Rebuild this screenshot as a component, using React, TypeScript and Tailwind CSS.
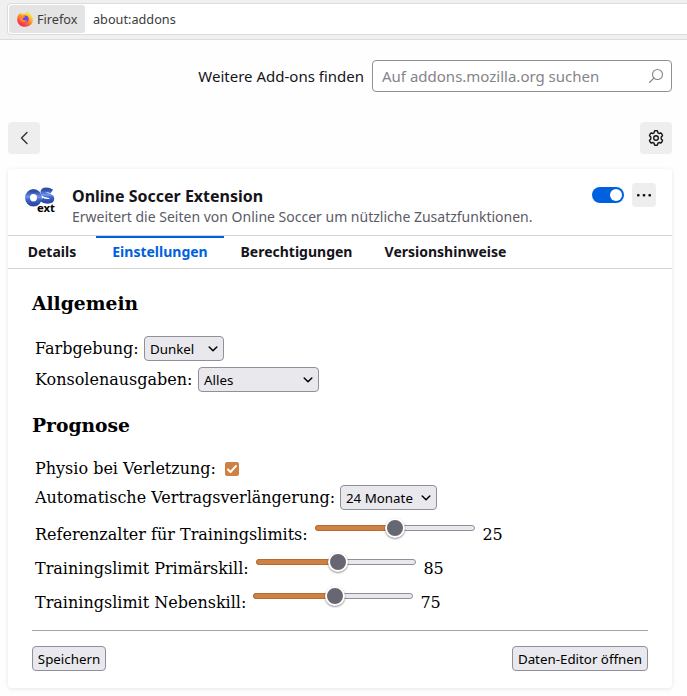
import React from "react";

function FirefoxLogo() {
  return (
    <svg width="16" height="16" viewBox="0 0 16 16">
      <defs>
        <linearGradient id="flame" x1="0.8" y1="0.05" x2="0.25" y2="0.95">
          <stop offset="0" stopColor="#fff04a" />
          <stop offset="0.35" stopColor="#ffbd2e" />
          <stop offset="0.65" stopColor="#ff6a2f" />
          <stop offset="1" stopColor="#f5215f" />
        </linearGradient>
      </defs>
      <path
        d="M8.6 2.8C8.9 1.5 9.8.6 10.7.1c.1 1.3 1 1.8 2 2.7 1.9 1.5 3.2 3.6 3.2 6 0 4-3.4 7-7.8 7S.2 12.7.2 8.7C.2 6.5.7 4.5 1.7 3c0 .5.1.8.3 1.1C2.4 2.9 3 2 3.8 1.3c0 1 .3 1.5 1 1.9 1.2-.7 2.5-.8 3.8-.4z"
        fill="url(#flame)"
      />
      <circle cx="8.2" cy="8.1" r="3.5" fill="#7543e3" />
      <path d="M2 5.2c1.5-1 3-.9 4.2-.2.8.4 1.5.4 2.2.4-.4 1-1.3 1.2-2.1 1.500-.9.400-.8 1.600.2 2.200 1.400.8 2.600-.2 3.700.4-.9 1.600-3.200 2.200-5 1.100C3.300 9.500 2.300 7.500 2 5.200z" fill="#ff8a2a" />
    </svg>
  );
}

function GearIcon() {
  return (
    <svg width="16" height="16" viewBox="0 0 16 16" fill="none" stroke="#15141a" strokeWidth="1.4" strokeLinejoin="round">
      <path d="M6.9.8h2.200q.4 0 .5.5l.3 1.500 1.200.7 1.500-.5q.5-.1.800.3l1 1.800q.3.500-.1.800L13.200 7v2l1.100 1.100q.4.400.1.800l-1 1.800q-.3.400-.8.300l-1.500-.5-1.200.7-.3 1.500q-.1.500-.5.500H6.900q-.4 0-.5-.5l-.3-1.500-1.200-.7-1.500.5q-.5.1-.8-.3l-1-1.800q-.3-.5.1-.8L2.800 9V7L1.700 5.900q-.4-.4-.1-.8l1-1.800q.3-.4.800-.3l1.500.5 1.200-.7.300-1.500q.1-.5.500-.5z" />
      <circle cx="8" cy="8" r="2.300" />
    </svg>
  );
}

function ExtensionLogo() {
  return (
    <svg width="32" height="32" viewBox="0 0 32 32">
      <defs>
        <linearGradient id="blue" x1="0" y1="0" x2="0" y2="1">
          <stop offset="0" stopColor="#2f4fa8" />
          <stop offset="0.45" stopColor="#7596ea" />
          <stop offset="0.6" stopColor="#4468d2" />
          <stop offset="1" stopColor="#2e4aa8" />
        </linearGradient>
      </defs>
      <g fill="none" stroke="url(#blue)">
        <ellipse cx="9.5" cy="12.800" rx="6" ry="6.200" strokeWidth="5" />
        <path d="M27.800 6.600C24.500 4.300 19 4.100 18.700 7.400c-.2 3.800 9.500 2 9.300 6.200-.2 3.700-7.600 3.500-10.500.8" strokeWidth="4.600" />
      </g>
      <text x="13" y="27" fontSize="10.500" fontWeight="700" fontFamily="Noto Sans, sans-serif" textLength="18" lengthAdjust="spacingAndGlyphs" fill="#000" stroke="#fff" strokeWidth="1.500" paintOrder="stroke">ext</text>
    </svg>
  );
}

function Select({ value, className }: { value: string; className: string }) {
  return (
    <button className={`flex h-[25px] items-center justify-between rounded border border-[#8f8f9d] bg-[#e9e9ed] px-[5px] font-['Noto_Sans',sans-serif] text-[13.33px] leading-[21px] text-black ${className}`}>
      <span className="pt-[2px] whitespace-nowrap">{value}</span>
      <svg width="10" height="6" viewBox="0 0 10 6" fill="none" stroke="#000" strokeWidth="1.5" strokeLinecap="round" strokeLinejoin="round">
        <path d="M1.200 1 5 4.800 8.800 1" />
      </svg>
    </button>
  );
}

function Slider({ fill }: { fill: number }) {
  return (
    <div className="relative h-[6px] w-[160px] shrink-0 rounded-[3px] border border-[#8f8f9d] bg-[#e9e9ed]">
      <div className="absolute -top-px -left-px h-[6px] rounded-l-[3px] border border-[#b76b30] bg-[#cf8144]" style={{ width: fill }} />
      <div className="absolute -top-[8px] size-5 rounded-full border-2 border-white bg-[#676774] shadow-[0_1px_2px_rgba(0,0,0,0.45)]" style={{ left: fill - 11 }} />
    </div>
  );
}

function RangeRow({ label, labelWidth, fill, value }: { label: string; labelWidth: string; fill: number; value: number }) {
  return (
    <div className="flex h-[34px] pl-[3px]">
      <span className={`shrink-0 pt-[10px] leading-[19px] whitespace-nowrap ${labelWidth}`}>{label}</span>
      <div className="pt-[10px]"><Slider fill={fill} /></div>
      <span className="pt-[10px] pl-[7.4px] leading-[19px]">{value}</span>
    </div>
  );
}

export default function App() {
  return (
    <div className="h-[696px] w-[687px] overflow-hidden bg-[#fefefe] font-['Noto_Sans',sans-serif] text-[#15141a]">
      <header className="h-10 border-b border-[#dcdcdc] bg-[#f0f0f0] pt-[3px] pl-[7px]">
        <div className="flex h-8 items-center rounded-l-[4px] border border-r-0 border-[#dcdcdc] bg-white pl-px text-[12.7px] text-[#3c3c3c]">
          <div className="flex h-7 w-[76px] items-center gap-1 rounded-[3px] bg-[#e4e4e4] pl-2">
            <FirefoxLogo />
            <span className="pt-[2px]">Firefox</span>
          </div>
          <span className="pt-[2px] pl-2">about:addons</span>
        </div>
      </header>

      <div className="flex h-[72px] items-center justify-end gap-2 pr-[15px] text-[15px]">
        <span>Weitere Add-ons finden</span>
        <div className="flex h-8 w-[300px] items-center justify-between rounded-[4px] border border-[#909094] bg-white pr-[7px] pl-[9px] text-[#85848a]">
          <span>Auf addons.mozilla.org suchen</span>
          <svg width="16" height="16" viewBox="0 0 16 16" fill="none" stroke="#85858a" strokeWidth="1.1" strokeLinecap="round">
            <circle cx="9.5" cy="6.5" r="5" />
            <path d="m6 10-4.500 4.500" />
          </svg>
        </div>
      </div>

      <div className="flex h-[57px] items-start justify-between pt-[10px] pr-[15px] pl-2">
        <button className="flex size-8 items-center justify-center rounded bg-[#eeeeee]">
          <svg width="16" height="16" viewBox="0 0 16 16" fill="none" stroke="#303034" strokeWidth="1.4" strokeLinecap="round" strokeLinejoin="round">
            <path d="M11 2.500 5.500 8l5.500 5.500" />
          </svg>
        </button>
        <button className="flex size-8 items-center justify-center rounded bg-[#eeeeee]"><GearIcon /></button>
      </div>

      <main className="ml-2 h-[519px] w-[664px] rounded bg-white shadow-[0_1px_4px_rgba(12,12,13,0.1)]">
        <div className="flex h-[67px] border-b border-[#d4d4d6] pt-4 pl-4">
          <ExtensionLogo />
          <div className="w-[536px] pl-4">
            <h1 className="text-[16px] leading-[22px] font-bold">Online Soccer Extension</h1>
            <p className="text-[14px] leading-[20px] text-[#5b5b66]">Erweitert die Seiten von Online Soccer um nützliche Zusatzfunktionen.</p>
          </div>
          <div className="mt-[2px] flex h-4 w-8 justify-end rounded-full bg-[#0061e0] p-[2px]">
            <span className="size-3 rounded-full bg-white" />
          </div>
          <button className="-mt-[2px] ml-2 flex size-6 items-center justify-center rounded bg-[#eeeeee]">
            <svg width="16" height="16" viewBox="0 0 16 16" fill="#15141a">
              <rect x="1" y="7" width="2.600" height="2.600" rx="0.800" />
              <rect x="6.700" y="7" width="2.600" height="2.600" rx="0.800" />
              <rect x="12.400" y="7" width="2.600" height="2.600" rx="0.800" />
            </svg>
          </button>
        </div>
        <nav className="flex h-[33px] border-b border-[#d4d4d6] text-center text-[14px] leading-[28px] font-bold">
          <span className="w-[88px] border-t-2 border-transparent">Details</span>
          <span className="w-[128px] border-t-2 border-[#0061e0] text-[#0061e0]">Einstellungen</span>
          <span className="w-[145px] border-t-2 border-transparent">Berechtigungen</span>
          <span className="w-[153px] border-t-2 border-transparent">Versionshinweise</span>
        </nav>

        <section className="px-6 pt-[20px] font-['DejaVu_Serif',serif] text-[16px] text-black">
          <h2 className="h-[44px] text-[18.72px] leading-[28px] font-bold">Allgemein</h2>
          <div className="flex h-[31px] items-start pt-[3px] pl-[3px]">
            <span className="w-[109px] leading-[25px] whitespace-nowrap">Farbgebung:</span>
            <Select value="Dunkel" className="w-20" />
          </div>
          <div className="flex h-[47px] items-start pt-[3px] pl-[3px]">
            <span className="w-[163px] leading-[25px] whitespace-nowrap">Konsolenausgaben:</span>
            <Select value="Alles" className="w-[121px]" />
          </div>
          <h2 className="h-[42px] text-[18.72px] leading-[28px] font-bold">Prognose</h2>
          <div className="flex h-[29px] items-start pt-[3px] pl-[3px]">
            <span className="w-[190px] leading-[25px] whitespace-nowrap">Physio bei Verletzung:</span>
            <span className="mt-[6px] flex size-[14px] items-center justify-center rounded-[2px] bg-[#cf8144]">
              <svg width="12" height="12" viewBox="0 0 12 12" fill="none" stroke="#fff" strokeWidth="2" strokeLinecap="round" strokeLinejoin="round">
                <path d="M2 6.500 4.500 9 10 3" />
              </svg>
            </span>
          </div>
          <div className="flex h-[33px] items-start pt-[3px] pl-[3px]">
            <span className="w-[305px] leading-[25px] whitespace-nowrap">Automatische Vertragsverlängerung:</span>
            <Select value="24 Monate" className="w-[97px]" />
          </div>
          <RangeRow label="Referenzalter für Trainingslimits:" labelWidth="w-[280px]" fill={80} value={25} />
          <RangeRow label="Trainingslimit Primärskill:" labelWidth="w-[221px]" fill={82} value={85} />
          <RangeRow label="Trainingslimit Nebenskill:" labelWidth="w-[218px]" fill={82} value={75} />
          <div className="mt-[13px] flex justify-between border-t border-[#a5a5a5] pt-[15px] font-['Noto_Sans',sans-serif] text-[13.33px] leading-[21px]">
            <button className="h-[25px] w-[74px] rounded border border-[#8f8f9d] bg-[#e9e9ed] pt-[2px] whitespace-nowrap">Speichern</button>
            <button className="h-[25px] w-[136px] rounded border border-[#8f8f9d] bg-[#e9e9ed] pt-[2px] whitespace-nowrap">Daten-Editor öffnen</button>
          </div>
        </section>
      </main>
    </div>
  );
}
